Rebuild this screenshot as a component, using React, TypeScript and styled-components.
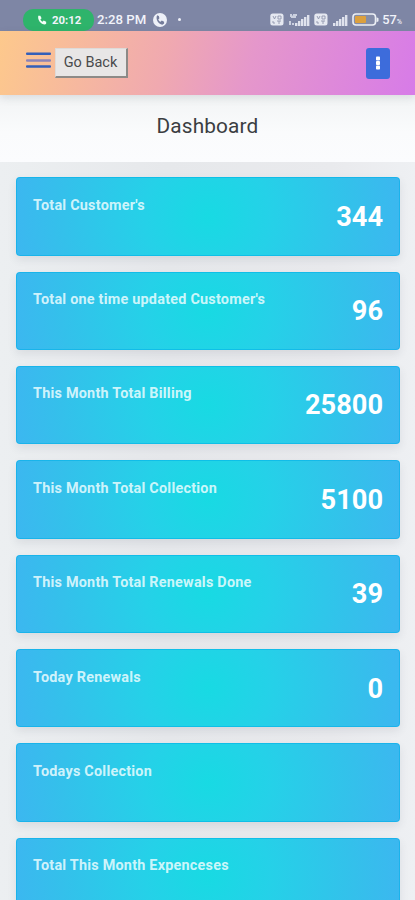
import React from 'react';
import styled, { createGlobalStyle } from 'styled-components';

const GlobalStyle = createGlobalStyle`
  * { box-sizing: border-box; }
  html, body { margin: 0; height: 900px; overflow: hidden; }
  body { font-family: Roboto, sans-serif; background: #e9ecef; }
`;

const Screen = styled.div`
  width: 415px;
  height: 900px;
  overflow: hidden;
  background: linear-gradient(90deg, #eceff1, #e6e8eb 40%, #e9eaed 80%, #eef0f3);
`;

const StatusBar = styled.div`
  height: 31px;
  padding: 8px 13px 0 23px;
  display: flex;
  justify-content: space-between;
  background: #7e86a5;
  color: #f1f3fa;
`;

const StatusGroup = styled.div`
  display: flex;
  align-items: center;
  height: 23px;
`;

const CallPill = styled.div`
  width: 71px;
  height: 22px;
  display: flex;
  align-items: center;
  padding-left: 14px;
  gap: 5px;
  border-radius: 10px;
  background: #2eb46b;
  font-size: 11.4px;
  font-weight: 700;
`;

const Clock = styled.span`
  margin: 0 6px 0 3px;
  font-size: 13.2px;
  font-weight: 500;
  width: 50px;
  white-space: nowrap;
`;

const Dot = styled.span`
  width: 3px;
  height: 3px;
  margin-left: 11px;
  border-radius: 50%;
  background: #eef0f8;
`;

const Percent = styled.span`
  display: flex;
  align-items: baseline;
  margin-left: 3px;
  font-size: 12.8px;
  font-weight: 500;
  small { font-size: 7px; }
`;

const TopBar = styled.header`
  position: relative;
  height: 64px;
  padding: 16px 25px 0 26px;
  display: flex;
  align-items: flex-start;
  background: linear-gradient(105deg, #fdc98c 0%, #f0a9b0 40%, #e597cb 60%, #d77be8 100%);
  box-shadow: 0 3px 8px rgba(70, 80, 90, 0.14);
`;

const BurgerIcon = styled.svg`
  width: 25px;
  height: 17px;
  margin: 5px 4px 0 0;
`;

const BackButton = styled.button`
  width: 73px;
  height: 30px;
  margin-top: 1px;
  padding: 0 1px 1px 0;
  border: 1px solid #dedad8;
  border-right: 2px solid #8d8a87;
  border-bottom: 2px solid #8d8a87;
  background: #e8e6e6;
  color: #4a4b4d;
  font: 400 14.5px Roboto, sans-serif;
`;

const MenuButton = styled.button`
  width: 24px;
  height: 31px;
  margin: 0.5px 0 0 auto;
  padding: 0;
  border: 0;
  border-radius: 3px;
  display: grid;
  place-items: center;
  background: #3d6cdb;
`;

const TitleBand = styled.div`
  height: 67px;
  display: flex;
  justify-content: center;
  padding-top: 18px;
  background: linear-gradient(#f2f4f5, #fafbfc 55%, #fbfcfe);
`;

const Title = styled.h1`
  margin: 0;
  color: #3b3e42;
  font-size: 20.8px;
  font-weight: 400;
  letter-spacing: 0.15px;
  line-height: 26px;
`;

const CardList = styled.main`
  display: grid;
  gap: 16px;
  padding: 15.3px 15px 0 16px;
`;

const Card = styled.section`
  height: 78.35px;
  padding: 16.5px 16px 0;
  display: flex;
  justify-content: space-between;
  border: 1px solid rgba(0, 174, 232, 0.55);
  border-radius: 4px;
  background: radial-gradient(circle at 50% 50%, #18dae3 0%, #25d1e8 32%, #34c0eb 75%, #3cb7f0 100%) border-box;
  box-shadow: 0 4px 9px rgba(70, 80, 100, 0.11);
`;

const CardLabel = styled.span`
  color: rgba(241, 254, 255, 0.84);
  font-size: 14.4px;
  font-weight: 700;
  letter-spacing: 0.23px;
  line-height: 22px;
`;

const CardValue = styled.span`
  margin-top: 5px;
  color: #fff;
  font-size: 27.2px;
  font-weight: 700;
  line-height: 34px;
`;

const Handset = ({ size, color }: { size: number; color: string }) => (
  <svg width={size} height={size} viewBox="0 0 24 24" fill={color}>
    <path d="M3 2l5 0 3 6-3 3c1 2 3 4 5 5l3-3 6 3v5l-3 2C9 23 1 12 3 2z" />
  </svg>
);

const CallCircle = () => (
  <svg width="14" height="14" viewBox="0 0 24 24">
    <circle cx="12" cy="12" r="12" fill="#edf0f8" />
    <path d="M7 4l3 1 1 4-2 2c1 2 2 3 4 4l2-2 4 2v3l-3 2C9 19 4 11 7 4z" fill="#737b9a" />
  </svg>
);

const VoLte = () => (
  <svg width="14" height="13" viewBox="0 0 14 13" fill="none">
    <rect x="0.3" y="0.5" width="13.2" height="12" rx="2.5" fill="#e5e8f1" />
    <path d="M3 3l1.5 3L6 3M8 3h3v3H8zM3 8v2h2M7 8h4M9 8v3" stroke="#8e95ad" strokeWidth="0.9" />
  </svg>
);

const Signal = ({ network }: { network?: boolean }) => (
  <svg width={network ? 22 : 16} height="14" viewBox={network ? '0 0 22 14' : '6 0 16 14'} fill="#dfe2ed">
    {network && <path d="M2 1h2v1.5h1V1h4v2H8v2H3V4H2zM1 8h2v4H1zM4 10h2v2H4z" opacity=".8" />}
    <path d="M7 10h2.4v3H7zM10 8h2.4v5H10zM13 6h2.4v7H13zM16 4h2.4v9H16zM19 2h2.4v11H19z" />
  </svg>
);

const Battery = () => (
  <svg width="27" height="13" viewBox="0 0 27 13">
    <rect x="1" y="1" width="22.5" height="11" rx="3" fill="#858da8" stroke="#eceff5" strokeWidth="1.6" />
    <path d="M24.5 4.2l2 1v3l-2 1z" fill="#eceff5" />
    <rect x="3" y="3" width="11" height="7" rx="1" fill="#dca03e" />
  </svg>
);

const SignalCluster = styled(StatusGroup)`
  gap: 4px;
`;

const cards = [
  { label: "Total Customer's", value: '344' },
  { label: "Total one time updated Customer's", value: '96' },
  { label: 'This Month Total Billing', value: '25800' },
  { label: 'This Month Total Collection', value: '5100' },
  { label: 'This Month Total Renewals Done', value: '39' },
  { label: 'Today Renewals', value: '0' },
  { label: 'Todays Collection', value: '' },
  { label: 'Total This Month Expenceses', value: '' },
];

export default function App() {
  return (
    <>
      <GlobalStyle />
      <Screen>
        <StatusBar>
          <StatusGroup>
            <CallPill>
              <Handset size={10} color="#f4fff8" />
              <span>20:12</span>
            </CallPill>
            <Clock>2:28 PM</Clock>
            <CallCircle />
            <Dot />
          </StatusGroup>
          <StatusGroup>
            <SignalCluster>
              <VoLte />
              <Signal network />
              <VoLte />
              <Signal />
              <Battery />
            </SignalCluster>
            <Percent>57<small>%</small></Percent>
          </StatusGroup>
        </StatusBar>
        <TopBar>
          <BurgerIcon viewBox="0 0 25 17">
            <rect y="0.6" width="25" height="2.5" rx="1" fill="#345fb9" />
            <rect y="7.2" width="25" height="2.5" rx="1" fill="#8c83b7" />
            <rect y="13.3" width="25" height="2.5" rx="1" fill="#345fb9" />
          </BurgerIcon>
          <BackButton>Go Back</BackButton>
          <MenuButton aria-label="Menu">
            <svg width="4" height="14" viewBox="0 0 4 14" fill="#fff">
              <rect y="0.5" width="4" height="4" rx="0.8" />
              <rect y="5" width="4" height="4" rx="0.8" />
              <rect y="9.5" width="4" height="4" rx="0.8" />
            </svg>
          </MenuButton>
        </TopBar>
        <TitleBand>
          <Title>Dashboard</Title>
        </TitleBand>
        <CardList>
          {cards.map((card) => (
            <Card key={card.label}>
              <CardLabel>{card.label}</CardLabel>
              <CardValue>{card.value}</CardValue>
            </Card>
          ))}
        </CardList>
      </Screen>
    </>
  );
}
